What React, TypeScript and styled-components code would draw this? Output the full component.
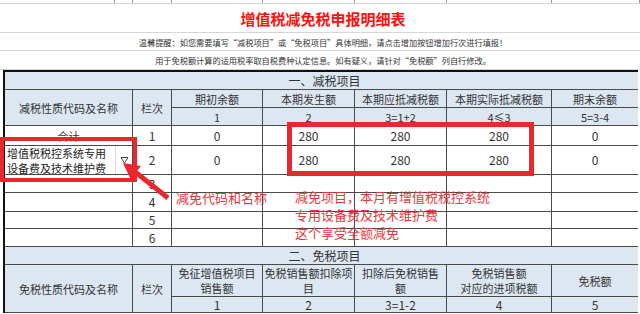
import React from "react";
import styled, { createGlobalStyle } from "styled-components";

const Global = createGlobalStyle`
  html, body { margin: 0; padding: 0; background: #fff; }
  body { font-family: "Noto Sans CJK SC", "Noto Sans", sans-serif; }
`;

const RED = "#e8282c";
const LINE = "#4a4a4a";
const HEAD = "#dde7f2";
const SHEET = "#d6d6d6";

const Page = styled.div`
  position: relative;
  width: 640px;
  height: 314px;
  overflow: hidden;
  background: #fff;
`;

const TopStrip = styled.div`
  height: 4px;
  display: grid;
  grid-template-columns: 110px 18px 39px 91px 92px 92px 105px 1fr;
  padding-left: 5px;
  border-bottom: 1px solid ${SHEET};
  box-sizing: border-box;
`;

const StripCell = styled.div`
  border-right: 1px solid #9a9a9a;
`;

const SheetRow = styled.div<{ $h: number; $size: number; $color?: string; $bold?: boolean }>`
  height: ${(p) => p.$h}px;
  box-sizing: border-box;
  border-bottom: 1px solid ${SHEET};
  display: flex;
  align-items: center;
  justify-content: center;
  padding-left: 6px;
  font-size: ${(p) => p.$size}px;
  font-weight: ${(p) => (p.$bold ? 700 : 400)};
  color: ${(p) => p.$color || "#333"};
  white-space: nowrap;
`;

const TableWrap = styled.div`
  padding-left: 3px;
`;

const Grid = styled.div`
  display: grid;
  grid-template-columns: 128px 39px 91px 92px 92px 105px 1fr;
  grid-template-rows: 18px 18px 18px 20px 29px 18px 19px 17px 18px 18px 32px 16px;
  border-left: 2px solid #111;
  border-top: 2px solid #111;
  width: 635px;
  box-sizing: border-box;
`;

const Cell = styled.div<{
  $col?: string;
  $row?: string;
  $head?: boolean;
  $size?: number;
  $last?: boolean;
}>`
  grid-column: ${(p) => p.$col || "auto"};
  grid-row: ${(p) => p.$row || "auto"};
  background: ${(p) => (p.$head ? HEAD : "#fff")};
  border-right: ${(p) => (p.$last ? "none" : `1px solid ${LINE}`)};
  border-bottom: 1px solid ${LINE};
  box-sizing: border-box;
  display: flex;
  align-items: center;
  justify-content: center;
  text-align: center;
  font-size: ${(p) => p.$size || 11}px;
  line-height: 14px;
  color: #333;
  white-space: nowrap;
  overflow: hidden;
`;

const SectionTitle = styled(Cell)`
  font-size: 12px;
  padding-left: 6px;
`;

const WrapText = styled.span`
  white-space: nowrap;
  line-height: 15px;
`;

const DropCell = styled.div`
  grid-column: 1;
  grid-row: 5;
  border-right: 1px solid ${LINE};
  border-bottom: 1px solid ${LINE};
  box-sizing: border-box;
  display: flex;
  align-items: center;
`;

const DropText = styled.div`
  flex: 1;
  font-size: 11px;
  line-height: 15px;
  color: #222;
  padding-left: 2px;
  padding-top: 1px;
  white-space: nowrap;
`;

const DropButton = styled.div`
  width: 16px;
  align-self: stretch;
  border-left: 1px solid #d8d8d8;
  display: flex;
  align-items: center;
  justify-content: center;
`;

const RedBox = styled.div<{ $x: number; $y: number; $w: number; $h: number; $t: number }>`
  position: absolute;
  left: ${(p) => p.$x}px;
  top: ${(p) => p.$y}px;
  width: ${(p) => p.$w}px;
  height: ${(p) => p.$h}px;
  border: ${(p) => p.$t}px solid ${RED};
  box-sizing: border-box;
  pointer-events: none;
`;

const Note = styled.div<{ $x: number; $y: number }>`
  position: absolute;
  left: ${(p) => p.$x}px;
  top: ${(p) => p.$y}px;
  color: #e8373c;
  font-size: 13px;
  line-height: 18px;
  white-space: nowrap;
`;

const Overlay = styled.svg`
  position: absolute;
  left: 0;
  top: 0;
  pointer-events: none;
`;

const cols = ["1", "2", "3", "4", "5", "6", "7"];

export default function App() {
  const part1Rows: [string, string, string, string, string, string][] = [
    ["1", "0", "280", "280", "280", "0"],
    ["2", "0", "280", "280", "280", "0"],
    ["3", "", "", "", "", ""],
    ["4", "", "", "", "", ""],
    ["5", "", "", "", "", ""],
    ["6", "", "", "", "", ""],
  ];

  return (
    <Page>
      <Global />
      <TopStrip>
        {Array.from({ length: 8 }).map((_, i) => (
          <StripCell key={i} />
        ))}
      </TopStrip>
      <SheetRow $h={29} $size={15} $color="#ff1010" $bold>
        增值税减免税申报明细表
      </SheetRow>
      <SheetRow $h={18} $size={8.2}>
        温馨提醒：如您需要填写“减税项目”或“免税项目”具体明细，请点击增加按钮增加行次进行填报！
      </SheetRow>
      <SheetRow $h={19} $size={8.2}>
        用于免税额计算的适用税率取自税费种认定信息。如有疑义，请针对“免税额”列自行修改。
      </SheetRow>
      <TableWrap>
        <Grid>
          <SectionTitle $col="1 / -1" $row="1" $head $last>
            一、减税项目
          </SectionTitle>
          <Cell $col="1" $row="2 / 4" $head>减税性质代码及名称</Cell>
          <Cell $col="2" $row="2 / 4" $head>栏次</Cell>
          <Cell $col="3" $row="2" $head>期初余额</Cell>
          <Cell $col="4" $row="2" $head>本期发生额</Cell>
          <Cell $col="5" $row="2" $head>本期应抵减税额</Cell>
          <Cell $col="6" $row="2" $head>本期实际抵减税额</Cell>
          <Cell $col="7" $row="2" $head $last>期末余额</Cell>
          <Cell $col="3" $row="3" $head>1</Cell>
          <Cell $col="4" $row="3" $head>2</Cell>
          <Cell $col="5" $row="3" $head>3=1+2</Cell>
          <Cell $col="6" $row="3" $head>4≤3</Cell>
          <Cell $col="7" $row="3" $head $last>5=3-4</Cell>

          <Cell $col="1" $row="4">合计</Cell>
          <DropCell>
            <DropText>
              增值税税控系统专用
              <br />
              设备费及技术维护费
            </DropText>
            <DropButton>
              <svg width="9" height="8" viewBox="0 0 9 8">
                <path d="M1 1.5 H8 L4.5 7 Z" fill="none" stroke="#444" strokeWidth="1" />
              </svg>
            </DropButton>
          </DropCell>
          {[6, 7, 8, 9].map((r) => (
            <Cell key={r} $col="1" $row={String(r)} />
          ))}
          {part1Rows.map((row, ri) =>
            row.map((v, ci) => (
              <Cell
                key={`${ri}-${ci}`}
                $col={cols[ci + 1]}
                $row={String(ri + 4)}
                $size={12}
                $last={ci === 5}
              >
                {v}
              </Cell>
            ))
          )}

          <SectionTitle $col="1 / -1" $row="10" $head $last>
            二、免税项目
          </SectionTitle>
          <Cell $col="1" $row="11 / 13" $head>免税性质代码及名称</Cell>
          <Cell $col="2" $row="11 / 13" $head>栏次</Cell>
          <Cell $col="3" $row="11" $head>
            <WrapText>免征增值税项目<br />销售额</WrapText>
          </Cell>
          <Cell $col="4" $row="11" $head>
            <WrapText>免税销售额扣除项<br />目</WrapText>
          </Cell>
          <Cell $col="5" $row="11" $head>
            <WrapText>扣除后免税销售<br />额</WrapText>
          </Cell>
          <Cell $col="6" $row="11" $head>
            <WrapText>免税销售额<br />对应的进项税额</WrapText>
          </Cell>
          <Cell $col="7" $row="11" $head $last>免税额</Cell>
          <Cell $col="3" $row="12" $head $size={12}>1</Cell>
          <Cell $col="4" $row="12" $head $size={12}>2</Cell>
          <Cell $col="5" $row="12" $head $size={12}>3=1-2</Cell>
          <Cell $col="6" $row="12" $head $size={12}>4</Cell>
          <Cell $col="7" $row="12" $head $size={12} $last>5</Cell>
        </Grid>
      </TableWrap>

      <RedBox $x={0} $y={137} $w={137} $h={45} $t={4} />
      <RedBox $x={287} $y={122} $w={247} $h={54} $t={5} />

      <Overlay width={640} height={314} viewBox="0 0 640 314">
        <polygon
          points="123,163 141,166 137.4,170.6 169.5,196 166.5,200 134.4,174.6 131,180"
          fill={RED}
        />
      </Overlay>

      <Note $x={176} $y={189}>减免代码和名称</Note>
      <Note $x={295} $y={188}>
        减免项目，本月有增值税税控系统
        <br />
        专用设备费及技术维护费
        <br />
        这个享受全额减免
      </Note>
    </Page>
  );
}
